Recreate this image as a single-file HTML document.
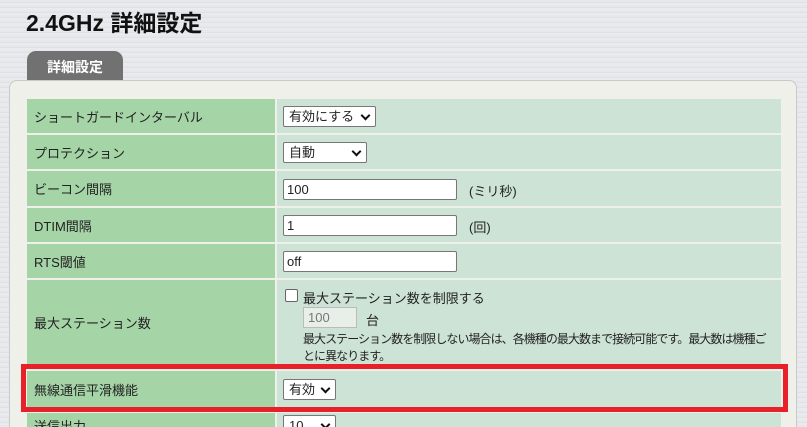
<!DOCTYPE html>
<html style="overflow:hidden;height:427px"><head><meta charset="utf-8"><style>
body{margin:0;width:807px;height:427px;overflow:hidden;background:repeating-linear-gradient(180deg,#e6e8ec 0 2px,#dfe1e5 2px 3px,#e9ebee 3px 5px);font-family:"Liberation Sans","Noto Sans CJK JP",sans-serif;font-size:13px;color:#222;position:relative}
h1{position:absolute;left:26px;top:4px;margin:0;font-size:23px;font-weight:bold;color:#111}
.tab{position:absolute;left:27px;top:51px;width:96px;height:30px;background:#717171;border-radius:9px 9px 0 0;color:#fff;font-weight:bold;font-size:14px;text-align:center;line-height:32px}
.panel{position:absolute;left:9px;top:80px;width:786px;height:360px;background:#f0f0ea;border:1px solid #c9c9c9;border-radius:8px}
.row{position:absolute;left:27px;width:754px}
.l{position:absolute;left:0;top:0;bottom:0;width:248px;background:#a5d4a7;padding-left:7px;box-sizing:border-box;display:flex;align-items:center}
.v{position:absolute;left:250px;right:0;top:0;bottom:0;background:#cde3d5}
.in{position:absolute;left:6px;width:174px;height:21px;box-sizing:border-box;border:1px solid #777;border-radius:2px;background:#fff;padding-left:3px;line-height:19px;font-size:13px}
.sel{position:absolute;left:6px;height:21px;box-sizing:border-box;border:1px solid #777;border-radius:2px;background:#fff;padding-left:5px;line-height:19px}
.sel:after{content:"";position:absolute;right:6px;top:5px;width:5px;height:5px;border-right:2px solid #111;border-bottom:2px solid #111;transform:rotate(45deg)}
.red{position:absolute;left:21px;top:364px;width:757px;height:38px;border:5px solid #e8202a}
</style></head><body>
<h1>2.4GHz 詳細設定</h1>
<div class="tab">詳細設定</div>
<div class="panel"></div>
<div class="row" style="top:99px;height:34px"><div class="l">ショートガードインターバル</div><div class="v"><div class="sel" style="top:7px;width:93px">有効にする</div></div></div>
<div class="row" style="top:135px;height:34px"><div class="l">プロテクション</div><div class="v"><div class="sel" style="top:7px;width:84px">自動</div></div></div>
<div class="row" style="top:171px;height:35px"><div class="l">ビーコン間隔</div><div class="v"><div class="in" style="top:8px">100</div><span style="position:absolute;left:192px;top:10px">(ミリ秒)</span></div></div>
<div class="row" style="top:208px;height:34px"><div class="l">DTIM間隔</div><div class="v"><div class="in" style="top:7px">1</div><span style="position:absolute;left:192px;top:9px">(回)</span></div></div>
<div class="row" style="top:244px;height:34px"><div class="l">RTS閾値</div><div class="v"><div class="in" style="top:7px">off</div></div></div>
<div class="row" style="top:280px;height:84px"><div class="l">最大ステーション数</div><div class="v">
<div style="position:absolute;left:8px;top:9px;width:11px;height:11px;border:1px solid #666;border-radius:2px;background:#fff"></div>
<span style="position:absolute;left:26px;top:8px">最大ステーション数を制限する</span>
<div style="position:absolute;left:26px;top:27px;width:54px;height:21px;box-sizing:border-box;border:1px solid #bbb;background:#e8efe9;color:#777;padding-left:4px;line-height:19px">100</div>
<span style="position:absolute;left:89px;top:30px">台</span>
<div style="position:absolute;left:26px;top:51px;width:470px;font-size:12px;letter-spacing:-0.95px;line-height:17px;white-space:nowrap">最大ステーション数を制限しない場合は、各機種の最大数まで接続可能です。最大数は機種ご<br>とに異なります。</div>
</div></div>
<div class="row" style="top:371px;height:36px"><div class="l">無線通信平滑機能</div><div class="v"><div class="sel" style="top:8px;width:53px">有効</div></div></div>
<div class="row" style="top:413px;height:14px"><div class="l" style="align-items:flex-start;padding-top:3px;overflow:hidden">送信出力</div><div class="v"><div class="sel" style="top:2px;width:53px">10</div></div></div>
<div class="red"></div>
</body></html>
